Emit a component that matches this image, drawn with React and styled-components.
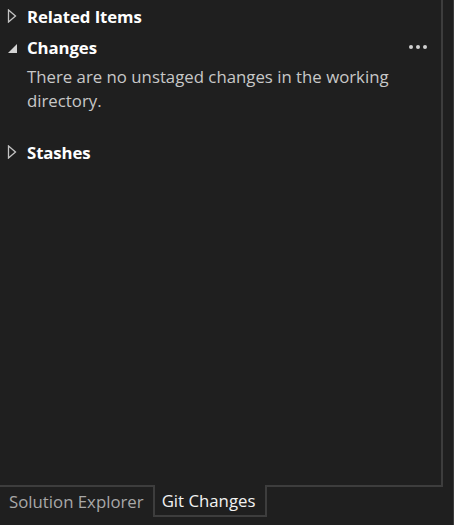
import React from 'react';
import styled, { createGlobalStyle } from 'styled-components';

const Global = createGlobalStyle`
  html, body {
    margin: 0;
    background: #1f1f1f;
  }
  body {
    font-family: "Open Sans", "Noto Sans", sans-serif;
  }
`;

const Window = styled.div`
  width: 454px;
  height: 525px;
  box-sizing: border-box;
  border-right: 1px solid #3a3a3a;
  display: flex;
  flex-direction: column;
  background: #1f1f1f;
`;

const Panel = styled.div`
  width: 443px;
  height: 485px;
  box-sizing: border-box;
  border-right: 2px solid #3d3d3d;
  padding-top: 3px;
  display: flex;
  flex-direction: column;
`;

const Section = styled.div`
  display: flex;
  flex-direction: column;
  margin-bottom: ${(p) => p.$gap || 0}px;
`;

const Header = styled.div`
  height: 26px;
  display: flex;
  align-items: center;
  padding: 0 12px 0 7px;
  gap: 11px;
  color: #ffffff;
  font-weight: 700;
  font-size: 16.8px;
  letter-spacing: -0.1px;
`;

const Title = styled.span`
  flex: 1;
`;

const Caret = styled.svg`
  width: 10px;
  height: 14px;
  flex: none;
  margin-right: -1px;
`;

const More = styled.span`
  display: flex;
  gap: 3px;
  margin-right: 2px;
  & > i {
    width: 4px;
    height: 4px;
    border-radius: 50%;
    background: #d0d0d0;
  }
`;

const Message = styled.p`
  margin: 5px 0 0;
  padding: 0 30px 0 27px;
  color: #c8c8c8;
  font-size: 16.8px;
  line-height: 24px;
`;

const TabBar = styled.div`
  width: 443px;
  height: 32px;
  display: flex;
`;

const Tab = styled.div`
  box-sizing: border-box;
  display: flex;
  align-items: center;
  font-size: 16.8px;
  ${(p) =>
    p.$active
      ? `
    border: 2px solid #3d3d3d;
    border-top: none;
    color: #f2f2f2;
    padding: 0 10px 0 7px;
  `
      : `
    border-top: 2px solid #3d3d3d;
    color: #a8a8a8;
    padding: 0 9px 2px;
  `}
`;

const Filler = styled.div`
  flex: 1;
  border-top: 2px solid #3d3d3d;
  border-right: 2px solid #3d3d3d;
  height: 0;
`;

function Arrow({ open }) {
  return open ? (
    <Caret viewBox="0 0 10 14">
      <path d="M10 4 L10 13 L1 13 Z" fill="#d4d4d4" />
    </Caret>
  ) : (
    <Caret viewBox="0 0 10 14">
      <path d="M1.5 1 L8.5 7 L1.5 13 Z" fill="none" stroke="#c4c4c4" strokeWidth="1.3" />
    </Caret>
  );
}

export default function App() {
  return (
    <Window>
      <Global />
      <Panel>
        <Section $gap={5}>
          <Header>
            <Arrow />
            <Title>Related Items</Title>
          </Header>
        </Section>
        <Section $gap={26}>
          <Header>
            <Arrow open />
            <Title>Changes</Title>
            <More>
              <i />
              <i />
              <i />
            </More>
          </Header>
          <Message>There are no unstaged changes in the working directory.</Message>
        </Section>
        <Section>
          <Header>
            <Arrow />
            <Title>Stashes</Title>
          </Header>
        </Section>
      </Panel>
      <TabBar>
        <Tab>Solution Explorer</Tab>
        <Tab $active>Git Changes</Tab>
        <Filler />
      </TabBar>
    </Window>
  );
}
